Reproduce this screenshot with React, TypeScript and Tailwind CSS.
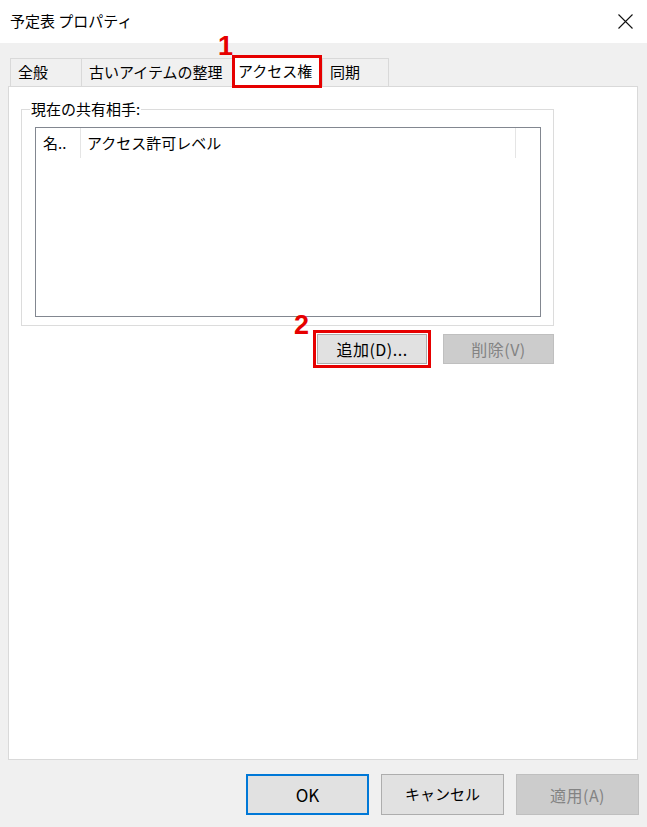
import React from 'react';

const font = { fontFamily: '"Noto Sans CJK JP", "Noto Sans", sans-serif' };
const markFont = { fontFamily: '"Liberation Sans", Arial, sans-serif' };

function Tab({ label, width, last }: { label: string; width: string; last?: boolean }) {
  return (
    <div
      className={`h-[28px] ${width} border-t border-l border-[#d9d9d9] bg-[#f0f0f0] pl-[7px] flex items-center text-[15px] text-black ${last ? 'border-r' : ''}`}
    >
      {label}
    </div>
  );
}

export default function App() {
  return (
    <div className="w-[647px] h-[827px] bg-[#f0f0f0] flex flex-col overflow-hidden" style={font}>
      {/* title bar */}
      <div className="h-[43px] bg-white flex items-center justify-between pl-[10px] pr-[14px]">
        <span className="text-[15px] text-black">予定表 プロパティ</span>
        <svg width="15" height="15" viewBox="0 0 15 15">
          <path d="M0.5 0.5 L14.5 14.5 M14.5 0.5 L0.5 14.5" stroke="#111" strokeWidth="1.1" />
        </svg>
      </div>

      <div className="pt-[15px] pl-[8px]">
        {/* tabs */}
        <div className="flex items-end ml-[2px] h-[28px]">
          <Tab label="全般" width="w-[71px]" />
          <Tab label="古いアイテムの整理" width="w-[151px]" />
          <div className="relative z-10 -mb-[2px] h-[33px] w-[90px] border-[3px] border-[#e60000] bg-white pl-[3px] flex items-center text-[15px] text-black">
            アクセス権
            <span className="absolute -left-[17px] -top-[25px] text-[27px] font-bold text-[#e60000] leading-none" style={markFont}>
              1
            </span>
          </div>
          <Tab label="同期" width="w-[67px]" last />
        </div>

        {/* panel */}
        <div className="w-[630px] h-[674px] border border-[#d9d9d9] bg-white">
          <div className="relative ml-[12px] mt-[22px] w-[533px] h-[217px] border border-[#dcdcdc] pt-[17px] pl-[13px]">
            <span className="absolute left-[8px] -top-[12px] px-[1px] bg-white text-[15px] leading-[22px] text-black">
              現在の共有相手:
            </span>
            <div className="w-[506px] h-[190px] border border-[#828790] bg-white">
              <div className="flex h-[30px] text-[15px] text-black">
                <div className="w-[45px] border-r border-[#e5e5e5] pl-[7px] flex items-center">名..</div>
                <div className="w-[435px] border-r border-[#e5e5e5] pl-[6px] flex items-center">アクセス許可レベル</div>
              </div>
            </div>
          </div>

          <div className="ml-[12px] mt-[4px] w-[533px] flex items-center justify-end gap-[12px]">
            <div className="relative border-[3px] border-[#e60000] p-[1px]">
              <span className="absolute -left-[22px] -top-[21px] text-[27px] font-bold text-[#e60000] leading-none" style={markFont}>
                2
              </span>
              <div className="w-[110px] h-[30px] border border-[#adadad] bg-[#e1e1e1] flex items-center justify-center text-[16px] tracking-[0.5px] text-black">
                追加(D)...
              </div>
            </div>
            <div className="w-[111px] h-[30px] border border-[#bfbfbf] bg-[#cccccc] flex items-center justify-center text-[16px] tracking-[0.5px] text-[#838383]">
              削除(V)
            </div>
          </div>
        </div>
      </div>

      {/* bottom buttons */}
      <div className="mt-[14px] pr-[8px] flex justify-end gap-[12px]">
        <div className="w-[123px] h-[41px] border-2 border-[#0078d7] bg-[#e1e1e1] flex items-center justify-center text-[17px] text-black">
          OK
        </div>
        <div className="w-[123px] h-[41px] border border-[#adadad] bg-[#e1e1e1] flex items-center justify-center text-[15px] text-black">
          キャンセル
        </div>
        <div className="w-[123px] h-[41px] border border-[#bfbfbf] bg-[#cccccc] flex items-center justify-center text-[16px] tracking-[0.5px] text-[#838383]">
          適用(A)
        </div>
      </div>
    </div>
  );
}
